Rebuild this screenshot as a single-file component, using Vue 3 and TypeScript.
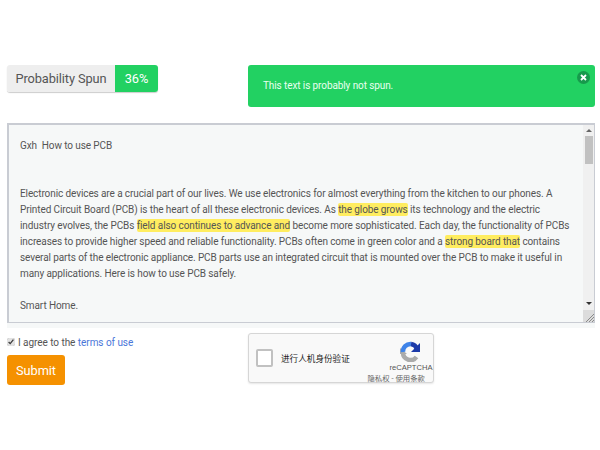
<script setup lang="ts">
const title = 'Gxh  How to use PCB'
</script>

<template>
  <div class="page">
    <div class="top">
      <div class="prob"><span class="prob-label">Probability Spun</span><span class="prob-val">36%</span></div>
      <div class="alert">
        <span>This text is probably not spun.</span>
        <span class="close">
          <svg width="7" height="7" viewBox="0 0 7 7"><path d="M1 1L6 6M6 1L1 6" stroke="#fff" stroke-width="1.8" /></svg>
        </span>
      </div>
    </div>
    <div class="editor-wrap">
      <div class="editor">
        <div class="text">
          <p class="title">{{ title }}</p>
          <p class="line">Electronic devices are a crucial part of our lives. We use electronics for almost everything from the kitchen to our phones. A</p>
          <p class="line">Printed Circuit Board (PCB) is the heart of all these electronic devices. As <mark>the globe grows</mark> its technology and the electric</p>
          <p class="line">industry evolves, the PCBs <mark>field also continues to advance and</mark> become more sophisticated. Each day, the functionality of PCBs</p>
          <p class="line">increases to provide higher speed and reliable functionality. PCBs often come in green color and a <mark>strong board that</mark> contains</p>
          <p class="line">several parts of the electronic appliance. PCB parts use an integrated circuit that is mounted over the PCB to make it useful in</p>
          <p class="line">many applications. Here is how to use PCB safely.</p>
          <p class="line gap">Smart Home.</p>
        </div>
        <div class="scrollbar">
          <span class="arrow up"></span>
          <span class="thumb"></span>
          <span class="arrow down"></span>
          <span class="corner">
            <svg width="9" height="9" viewBox="0 0 9 9"><path d="M1 9L9 1M4 9L9 4M7 9L9 7" stroke="#8a8a8a" stroke-width="1" /></svg>
          </span>
        </div>
      </div>
    </div>
    <div class="bottom">
      <div class="left">
        <label class="agree"><input type="checkbox" checked class="check" />I agree to the <a class="terms">terms of use</a></label>
        <button class="submit">Submit</button>
      </div>
      <div class="captcha">
        <span class="box"></span>
        <span class="cap-text">进行人机身份验证</span>
        <div class="logo">
          <svg width="20" height="21" viewBox="0 0 20 21" fill="none">
            <path d="M3 11.500A7.500 7.500 0 0 0 16.500 16" stroke="#ababab" stroke-width="4.500" />
            <path d="M0 7V13H7Z" fill="#ababab" />
            <path d="M3 11A7.500 7.500 0 0 1 11 3" stroke="#3f83e8" stroke-width="4.500" />
            <path d="M11 3A7.500 7.500 0 0 1 17 8" stroke="#1c3aa9" stroke-width="4.500" />
            <path d="M20 2V11H11Z" fill="#1c3aa9" />
          </svg>
          <span class="brand">reCAPTCHA</span>
        </div>
        <span class="legal">隐私权 - 使用条款</span>
      </div>
    </div>
  </div>
</template>

<style scoped>
.page {
  width: 600px;
  height: 450px;
  box-sizing: border-box;
  padding: 65px 5px 0 7px;
  font-family: "Roboto", "Lato", sans-serif;
  color: #495057;
  overflow: hidden;
  background: #fff;
}
.top {
  display: flex;
  justify-content: space-between;
  align-items: flex-start;
  height: 58px;
}
.prob {
  display: flex;
  height: 27px;
  border-radius: 3px;
  overflow: hidden;
  box-shadow: 0 1px 1px rgba(0, 0, 0, 0.2);
  font-size: 12.800px;
  letter-spacing: -0.1px;
  line-height: 27px;
}
.prob-label {
  width: 108px;
  text-align: center;
  background: #eeeeee;
  color: #555;
}
.prob-val {
  width: 43px;
  text-align: center;
  background: #22d162;
  color: #fff;
}
.alert {
  box-sizing: border-box;
  width: 347px;
  height: 42px;
  background: #22d162;
  border-radius: 3px;
  color: #e9fff0;
  font-size: 10px;
  letter-spacing: -0.1px;
  padding: 14px 15px;
  line-height: 14px;
  position: relative;
}
.close {
  position: absolute;
  top: 6px;
  right: 5px;
  width: 13px;
  height: 13px;
  border-radius: 50%;
  background: #179a4c;
  display: flex;
  align-items: center;
  justify-content: center;
}
.editor-wrap {
  height: 205px;
  background: #f6f8f8;
}
.editor {
  box-sizing: border-box;
  height: 200px;
  border: 1px solid #c9ccd3;
  border-top-width: 2px;
  border-left-width: 2px;
  display: flex;
  background: #f6f8f8;
}
.text {
  flex: 1;
  min-width: 0;
  padding: 13px 0 0 11px;
  font-size: 10px;
  letter-spacing: -0.1px;
  line-height: 16px;
  color: #555;
  white-space: pre;
  overflow: hidden;
}
.text p {
  margin: 0;
}
.title {
  height: 16px;
}
.text .title {
  margin-bottom: 32px;
}
.text .gap {
  margin-top: 16px;
}
mark {
  background: #ffed60;
  color: #555;
  border-radius: 2px;
  padding: 1px 0;
}
.scrollbar {
  width: 11px;
  flex: none;
  background: #f0f0f0;
  position: relative;
  display: flex;
  flex-direction: column;
  align-items: center;
}
.thumb {
  width: 8px;
  height: 28px;
  background: #c1c1c1;
  margin-top: 11px;
}
.arrow {
  position: absolute;
  width: 0;
  height: 0;
  border-left: 3px solid transparent;
  border-right: 3px solid transparent;
}
.up {
  top: 4px;
  border-bottom: 3px solid #666;
}
.down {
  bottom: 17px;
  border-top: 3px solid #333;
}
.corner {
  position: absolute;
  right: 0;
  bottom: 0;
  width: 11px;
  height: 12px;
  background: #dcdcdc;
  display: flex;
  align-items: flex-end;
  justify-content: flex-end;
}
.bottom {
  display: flex;
  margin-top: 5px;
}
.left {
  width: 241px;
}
.agree {
  display: flex;
  align-items: center;
  height: 18px;
  font-size: 10px;
  letter-spacing: -0.05px;
  white-space: pre;
  color: #555;
}
.check {
  width: 8px;
  height: 8px;
  margin: 0 3px 0 0;
  accent-color: #e2e2e2;
}
.terms {
  color: #4a76d9;
}
.submit {
  display: block;
  margin-top: 4px;
  width: 58px;
  height: 30px;
  border: 0;
  border-radius: 3px;
  background: #f59100;
  color: #fff;
  font: 12.800px "Roboto", sans-serif;
  letter-spacing: -0.1px;
  padding: 0;
}
.captcha {
  box-sizing: border-box;
  position: relative;
  width: 186px;
  height: 50px;
  border: 1px solid #d6d6d6;
  border-radius: 3px;
  background: #f9f9f9;
  box-shadow: 0 1px 2px rgba(0, 0, 0, 0.1);
  display: flex;
  align-items: center;
}
.box {
  box-sizing: border-box;
  width: 17px;
  height: 18px;
  margin: -1px 0 0 7px;
  border: 2px solid #c1c1c1;
  border-radius: 2px;
  background: #fff;
  flex: none;
}
.cap-text {
  margin-left: 8px;
  font: 8.600px "Noto Sans CJK SC", sans-serif;
  color: #222;
}
.logo {
  position: absolute;
  top: 7px;
  right: 1px;
  width: 42px;
  display: flex;
  flex-direction: column;
  align-items: center;
}
.logo svg {
  margin-right: 3px;
}
.brand {
  font: 7.600px "Liberation Sans", sans-serif;
  color: #555;
  line-height: 10px;
  margin-top: 1px;
}
.legal {
  position: absolute;
  right: 8px;
  bottom: -1px;
  font: 7.400px "Noto Sans CJK SC", sans-serif;
  color: #666;
  line-height: 11px;
}
</style>
